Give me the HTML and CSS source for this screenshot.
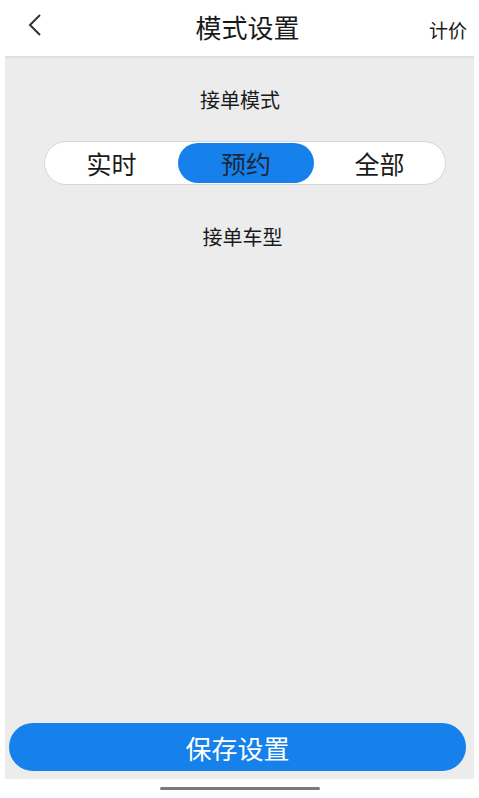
FILE: index.html
```html
<!DOCTYPE html>
<html lang="zh">
<head>
<meta charset="utf-8">
<link rel="stylesheet" href="styles.css">
</head>
<body>
<header class="topbar">
  <span class="back">
    <svg width="16" height="24" viewBox="0 0 16 24"><path d="M13 2 L3 12 L13 22" fill="none" stroke="#333" stroke-width="2"/></svg>
  </span>
  <h1 class="title">模式设置</h1>
  <span class="pricing">计价</span>
</header>
<main class="panel">
  <div class="section-label first">接单模式</div>
  <div class="segment">
    <div class="seg-item">实时</div>
    <div class="seg-item active">预约</div>
    <div class="seg-item">全部</div>
  </div>
  <div class="section-label second">接单车型</div>
  <div class="spacer"></div>
  <button class="save">保存设置</button>
</main>
<div class="home-area"><div class="home-bar"></div></div>
</body>
</html>
```
FILE: styles.css
```css
html, body {
  margin: 0;
  padding: 0;
  background: #ffffff;
  font-family: "Noto Sans CJK SC", "Noto Sans", sans-serif;
  color: #1a1a1a;
}
body {
  width: 479px;
  height: 798px;
  overflow: hidden;
  display: flex;
  flex-direction: column;
}
.topbar {
  height: 56px;
  display: flex;
  align-items: center;
  position: relative;
  flex: none;
}
.back {
  position: absolute;
  left: 27px;
  top: 13px;
  display: block;
  line-height: 0;
}
.title {
  margin: 0;
  width: 100%;
  text-align: center;
  font-size: 26px;
  line-height: 34px;
  font-weight: 400;
  color: #1a1a1a;
  padding-left: 16px;
  padding-bottom: 2px;
  box-sizing: border-box;
}
.pricing {
  position: absolute;
  right: 12px;
  top: 17px;
  font-size: 19px;
  line-height: 26px;
  color: #1a1a1a;
}
.panel {
  flex: none;
  height: 723px;
  margin: 0 5px 0 5px;
  background: #ececec;
  box-shadow: inset 0 3px 3px -2px #d4d4d4;
  display: flex;
  flex-direction: column;
}
.section-label {
  text-align: center;
  font-size: 20px;
  line-height: 26px;
  color: #1a1a1a;
}
.section-label.first {
  margin-top: 31px;
  padding-left: 1px;
}
.section-label.second {
  margin-top: 39px;
  padding-left: 6px;
}
.segment {
  margin: 28px 28px 0 39px;
  height: 44px;
  background: #ffffff;
  border: 1px solid #d6d6d6;
  border-radius: 22px;
  box-sizing: border-box;
  display: grid;
  grid-template-columns: 133px 136px 1fr;
  align-items: center;
}
.seg-item {
  height: 40px;
  display: flex;
  align-items: center;
  justify-content: center;
  font-size: 25px;
  color: #1a1a1a;
}
.seg-item.active {
  background: #1681ea;
  border-radius: 20px;
  color: #1d2840;
}
.spacer {
  flex: 1;
}
.save {
  margin: 0 8px 8px 4px;
  height: 48px;
  border: none;
  border-radius: 24px;
  background: #1681ea;
  color: #ffffff;
  font-family: "Noto Sans CJK SC", "Noto Sans", sans-serif;
  font-size: 26px;
  padding: 0;
}
.home-area {
  flex: 1;
  display: flex;
  justify-content: center;
  padding-top: 8px;
}
.home-bar {
  width: 160px;
  height: 3px;
  border-radius: 2px;
  background: #7a7a7a;
}
```
